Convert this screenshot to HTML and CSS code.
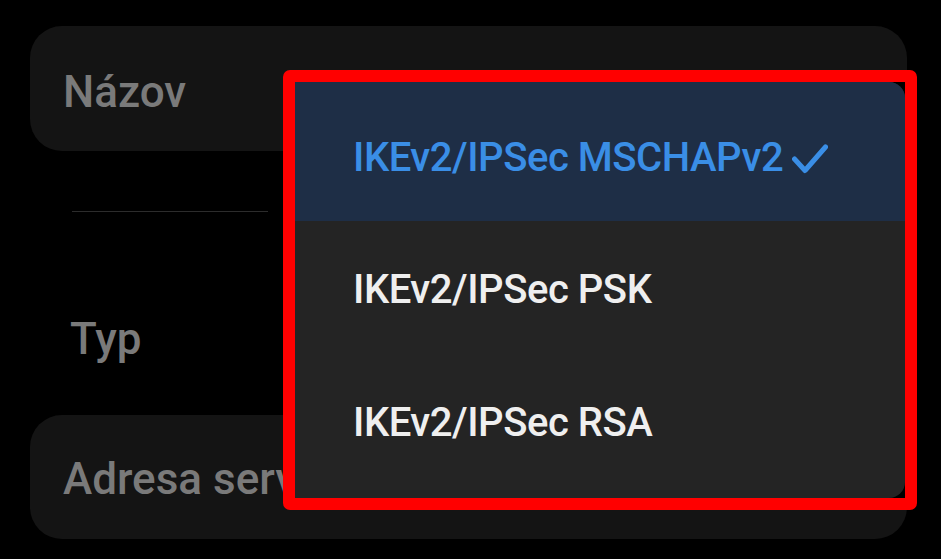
FILE: index.html
```html
<!DOCTYPE html>
<html lang="sk">
<head>
<meta charset="utf-8">
<title>VPN</title>
<link rel="stylesheet" href="styles.css">
</head>
<body>
<div class="page">
  <div class="field field-name"><span class="placeholder">Názov</span></div>
  <div class="divider"></div>
  <div class="type-label">Typ</div>
  <div class="field field-addr"><span class="placeholder">Adresa serveru</span></div>

  <div class="highlight-box">
    <div class="menu">
      <div class="item item-selected">
        <span class="item-text">IKEv2/IPSec MSCHAPv2</span>
        <svg class="check" width="36" height="30" viewBox="0 0 36 30"><polyline points="2.5,15 13,26.5 33.5,3" fill="none" stroke="#3a8ee6" stroke-width="5" stroke-linecap="round" stroke-linejoin="round"/></svg>
      </div>
      <div class="item"><span class="item-text">IKEv2/IPSec PSK</span></div>
      <div class="item"><span class="item-text">IKEv2/IPSec RSA</span></div>
    </div>
  </div>
</div>
</body>
</html>
```
FILE: styles.css
```css
html, body {
  margin: 0;
  padding: 0;
  background: #000;
}
body {
  width: 941px;
  height: 559px;
  overflow: hidden;
  font-family: Roboto, "Noto Sans", "Liberation Sans", sans-serif;
}
.page {
  position: relative;
  padding: 26px 34px 0 30px;
  box-sizing: border-box;
  height: 559px;
}
.field {
  background: #141414;
  border-radius: 32px;
  box-sizing: border-box;
  height: 125px;
  white-space: nowrap;
  overflow: hidden;
}
.field-name {
  padding: 40px 0 0 33px;
}
.field-addr {
  padding: 38px 0 0 33px;
  height: 124px;
  margin-top: 50px;
}
.placeholder, .type-label {
  font-size: 44px;
  line-height: 52px;
  font-weight: 500;
  color: #7a7a7a;
  display: block;
}
.divider {
  margin: 60px 0 0 42px;
  width: 196px;
  height: 1px;
  background: #2c2c2c;
}
.type-label {
  margin: 101px 0 0 40px;
}
.highlight-box {
  position: absolute;
  left: 283px;
  top: 70px;
  width: 634px;
  height: 440px;
  box-sizing: border-box;
  border: 12px solid #ff0000;
  border-radius: 7px;
  background: #000;
}
.menu {
  height: 100%;
  background: #242424;
  border-radius: 0 16px 16px 0;
  overflow: hidden;
}
.item {
  height: 133px;
  box-sizing: border-box;
  padding: 45px 0 0 58px;
  display: flex;
  align-items: flex-start;
}
.item-selected {
  height: 139px;
  padding-top: 52px;
  background: #1e2e46;
}
.item-text {
  font-size: 40px;
  line-height: 48px;
  font-weight: 500;
  letter-spacing: -0.45px;
  color: #efefef;
  white-space: nowrap;
}
.item-selected .item-text {
  color: #3a8ee6;
}
.check {
  margin: 10px 0 0 9px;
  flex: none;
}
```
